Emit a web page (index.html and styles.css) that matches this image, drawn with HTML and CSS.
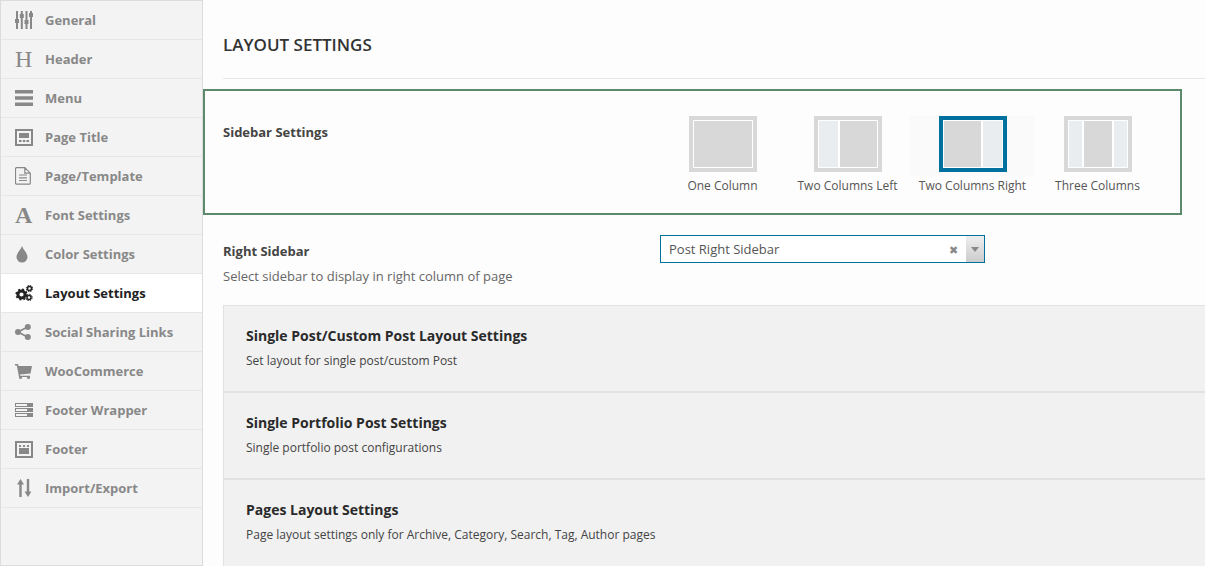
FILE: index.html
```html
<!DOCTYPE html>
<html lang="en">
<head>
<meta charset="utf-8">
<title>Layout Settings</title>
<link rel="stylesheet" href="styles.css">
</head>
<body>
<div class="app">
  <nav class="side">
    <a class="item"><span class="ico"><svg width="18" height="18" viewBox="0 0 18 18"><path d="M2 0v8M2 12v6M6.800 0v3M6.800 7v11M11.500 0v9M11.500 13v5M16 0v2M16 6v12" stroke="#888" stroke-width="2" fill="none"/><path d="M0 8h4v4H0zM4.800 3h4v4h-4zM9.500 9h4v4h-4zM14 2h4v4h-4z" fill="#888"/></svg></span>General</a>
    <a class="item"><span class="ico letter">H</span>Header</a>
    <a class="item"><span class="ico"><svg width="18" height="18" viewBox="0 0 18 18"><path d="M0 1h18v3.500H0zM0 7.200h18v3.500H0zM0 13.500h18v3.500H0z" fill="#888"/></svg></span>Menu</a>
    <a class="item"><span class="ico"><svg width="18" height="17" viewBox="0 0 18 17"><path fill-rule="evenodd" d="M0 0h18v17H0zM2 2v13h14V2z" fill="#888"/><path d="M4 4h10v5H4zM4 11h2.500v2H4zM7.800 11h2.500v2H7.800zM11.500 11H14v2h-2.500z" fill="#888"/></svg></span>Page Title</a>
    <a class="item"><span class="ico"><svg width="16" height="18" viewBox="0 0 16 18"><path d="M1.500.7h8.300l5.500 5.500v10a1 1 0 0 1-1 1H1.500a1 1 0 0 1-1-1V1.700a1 1 0 0 1 1-1zM9.800.7v5.500h5.500" fill="none" stroke="#888" stroke-width="1.200"/><path d="M4 8h8M4 10.800h8M4 13.500h8" stroke="#888" stroke-width="1.200"/></svg></span>Page/Template</a>
    <a class="item"><span class="ico letter letter-a">A</span>Font Settings</a>
    <a class="item"><span class="ico ico-drop"><svg width="12" height="17" viewBox="0 0 12 17"><path d="M6 0c1 3.500 5.500 7 5.500 11a5.500 5.500 0 0 1-11 0C.5 7 5 3.500 6 0z" fill="#888"/></svg></span>Color Settings</a>
    <a class="item active"><span class="ico"><svg width="18" height="16" viewBox="0 0 18 16"><g fill="none" stroke="#222"><circle cx="6.500" cy="9.500" r="3.600" stroke-width="3"/><circle cx="6.500" cy="9.500" r="5.300" stroke-width="1.600" stroke-dasharray="2 2.160"/><circle cx="14.500" cy="3.500" r="2" stroke-width="1.500"/><circle cx="14.500" cy="3.500" r="3.200" stroke-width="1" stroke-dasharray="1.500 1"/><circle cx="14" cy="12.500" r="2" stroke-width="1.500"/><circle cx="14" cy="12.500" r="3.200" stroke-width="1" stroke-dasharray="1.500 1"/></g></svg></span>Layout Settings</a>
    <a class="item"><span class="ico"><svg width="16" height="16" viewBox="0 0 16 16"><path d="M3 8l9.500-5M3 8l9.500 5" stroke="#888" stroke-width="1.800"/><circle cx="3" cy="8" r="3" fill="#888"/><circle cx="12.800" cy="3" r="3" fill="#888"/><circle cx="12.800" cy="13" r="3" fill="#888"/></svg></span>Social Sharing Links</a>
    <a class="item"><span class="ico"><svg width="17" height="15" viewBox="0 0 17 15"><path d="M0 0h3l.6 2H17l-1.500 7.500-10.500 1 .3 1.200H15v1.300H4L1.800 1.500H0z" fill="#888"/><circle cx="5.500" cy="13.500" r="1.500" fill="#888"/><circle cx="13.500" cy="13.500" r="1.500" fill="#888"/></svg></span>WooCommerce</a>
    <a class="item"><span class="ico"><svg width="18" height="14" viewBox="0 0 18 14"><path fill-rule="evenodd" d="M0 0h18v4H0zM0 5h18v4H0zM0 10h18v4H0zM1 1v2h11V1zM1 6v2h11V6zM1 11v2h11v-2z" fill="#888"/></svg></span>Footer Wrapper</a>
    <a class="item"><span class="ico"><svg width="18" height="17" viewBox="0 0 18 17"><path fill-rule="evenodd" d="M0 0h18v17H0zM2 2v13h14V2z" fill="#888"/><path d="M4 4h2v2H4zM8 4h2v2H8zM12 4h2v2h-2zM4 7h10v6H4z" fill="#888"/></svg></span>Footer</a>
    <a class="item"><span class="ico ico-arrows"><svg width="14" height="18" viewBox="0 0 14 18"><path d="M3.500 18V4M11 0v14" stroke="#888" stroke-width="2.400"/><path d="M0 5.500L3.500 0 7 5.500zM7.500 12.500L11 18l3.500-5.500z" fill="#888"/></svg></span>Import/Export</a>
  </nav>
  <main class="main">
    <h1 class="title">LAYOUT SETTINGS</h1>
    <section class="box">
      <h2 class="label">Sidebar Settings</h2>
      <div class="opts">
        <div class="opt"><div class="thumb"><i class="m"></i></div><span>One Column</span></div>
        <div class="opt"><div class="thumb"><i class="s w-l"></i><i class="m"></i></div><span>Two Columns Left</span></div>
        <div class="opt sel"><div class="thumb"><i class="m"></i><i class="s w-l"></i></div><span>Two Columns Right</span></div>
        <div class="opt"><div class="thumb"><i class="s w-n"></i><i class="m"></i><i class="s w-n"></i></div><span>Three Columns</span></div>
      </div>
    </section>
    <section class="row">
      <div class="row-text">
        <h2 class="label">Right Sidebar</h2>
        <p class="desc">Select sidebar to display in right column of page</p>
      </div>
      <div class="select">
        <span class="val">Post Right Sidebar</span>
        <span class="clear">✖</span>
        <span class="arrow"></span>
      </div>
    </section>
    <section class="panel"><h3>Single Post/Custom Post Layout Settings</h3><p>Set layout for single post/custom Post</p></section>
    <section class="panel"><h3>Single Portfolio Post Settings</h3><p>Single portfolio post configurations</p></section>
    <section class="panel"><h3>Pages Layout Settings</h3><p>Page layout settings only for Archive, Category, Search, Tag, Author pages</p></section>
  </main>
</div>
</body>
</html>
```
FILE: styles.css
```css
* { box-sizing: border-box; }
html, body { margin: 0; padding: 0; height: 566px; overflow: hidden; }
body { font-family: "Open Sans", "Liberation Sans", sans-serif; background: #fdfdfd; color: #444; }
.app { display: flex; width: 1205px; height: 566px; }
.side { width: 203px; flex: none; height: 566px; background: #f3f3f3; border: 1px solid #dcdcdc; padding: 0; }
.item { display: flex; align-items: center; height: 39px; padding-left: 14px; border-bottom: 1px solid #e6e6e6; font-size: 13px; font-weight: 700; color: #888; }
.item.active { background: #fff; color: #222; }
.ico { width: 30px; flex: none; display: flex; align-items: center; }
.ico svg { display: block; }
.ico-drop { padding-left: 1px; }
.ico-arrows { padding-left: 2px; }
.letter { font-family: "Liberation Serif", serif; font-size: 24px; font-weight: 400; line-height: 20px; color: #888; }
.letter-a { font-weight: 700; }
.main { flex: 1; min-width: 0; }
.title { margin: 0 0 10px 20px; height: 79px; padding-top: 33px; border-bottom: 1px solid #e8e8e8; font-size: 17px; line-height: 24px; font-weight: 600; color: #333; }
.box { display: flex; justify-content: space-between; width: 979px; height: 126px; border: 2px solid #5d8a6b; background: #fdfdfd; padding: 25px 0 0 18px; }
.label { margin: 0; font-size: 13px; line-height: 20px; font-weight: 700; color: #444; }
.box .label { margin-top: 6px; }
.opts { display: flex; margin-right: 20px; }
.opt { width: 125px; display: flex; flex-direction: column; align-items: center; height: 60px; font-size: 12px; color: #555; white-space: nowrap; }
.opt span { margin-top: 5px; line-height: 18px; }
.sel { background: #fafafa; }
.thumb { width: 68px; height: 56px; flex: none; display: flex; border: 4px solid #d8d8d8; background: #fff; padding: 1px; }
.sel .thumb { border-color: #00719f; }
.thumb i { display: block; height: 100%; }
.m { flex: 1; background: #d8d8d8; }
.s { background: #e9edf0; }
.w-l { width: 19px; }
.w-n { width: 13px; }
.thumb i + i { margin-left: 2px; }
.row { display: flex; height: 90px; padding: 20px 0 0 20px; }
.row-text { width: 437px; flex: none; padding-top: 6px; }
.desc { margin: 5px 0 0; font-size: 13px; line-height: 20px; color: #666; }
.select { display: flex; align-items: center; width: 325px; height: 28px; border: 1px solid #00719f; background: #fff; font-size: 13px; color: #555; }
.val { flex: 1; padding-left: 8px; }
.clear { font-size: 11px; color: #888; margin-right: 8px; }
.arrow { width: 18px; height: 100%; background: linear-gradient(#eee, #ccc); display: flex; align-items: center; justify-content: center; }
.arrow::after { content: ""; border: 4px solid transparent; border-top: 5px solid #888; margin-top: 4px; }
.panel { margin-left: 20px; height: 87px; background: #f1f1f1; border-top: 1px solid #e2e2e2; border-left: 1px solid #e2e2e2; border-bottom: 1px solid #e2e2e2; padding: 19px 0 0 22px; }
.panel:last-child { border-bottom: 0; }
.panel h3 { margin: 0; font-size: 14px; line-height: 22px; font-weight: 700; color: #2a2a2a; }
.panel p { margin: 5px 0 0; font-size: 12px; line-height: 18px; color: #444; }
```
